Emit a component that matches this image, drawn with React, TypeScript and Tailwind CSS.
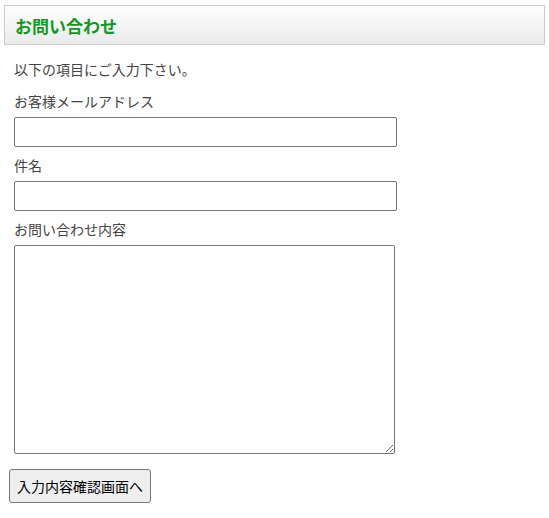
import React from "react";

const App = () => {
  return (
    <div className="pt-[5px] px-[4px] text-[14px] text-[#444] font-['Noto_Sans_CJK_JP','Noto_Sans',sans-serif]">
      <div className="h-[40px] flex items-center px-[10px] border border-[#ccc] bg-gradient-to-b from-white to-[#eaeaea]">
        <h1 className="text-[17px] font-bold text-[#119922] leading-none">お問い合わせ</h1>
      </div>
      <form className="px-[10px] pt-[14px]" onSubmit={(e) => e.preventDefault()}>
        <p className="leading-[21px] mb-[11px]">以下の項目にご入力下さい。</p>
        <label className="block leading-[21px] mb-[5px]">お客様メールアドレス</label>
        <input
          type="text"
          className="block w-[383px] h-[30px] border border-[#767676] rounded-[2px] bg-white mb-[8px]"
        />
        <label className="block leading-[21px] mb-[5px]">件名</label>
        <input
          type="text"
          className="block w-[383px] h-[30px] border border-[#767676] rounded-[2px] bg-white mb-[8px]"
        />
        <label className="block leading-[21px] mb-[5px]">お問い合わせ内容</label>
        <textarea className="block w-[381px] h-[209px] border border-[#767676] rounded-[2px] bg-white mb-[15px]" />
        <button
          type="submit"
          className="ml-[-5px] h-[34px] px-[7px] border border-[#767676] rounded-[3px] bg-[#efefef] text-black text-[14px] leading-none"
        >
          入力内容確認画面へ
        </button>
      </form>
    </div>
  );
};

export default App;
